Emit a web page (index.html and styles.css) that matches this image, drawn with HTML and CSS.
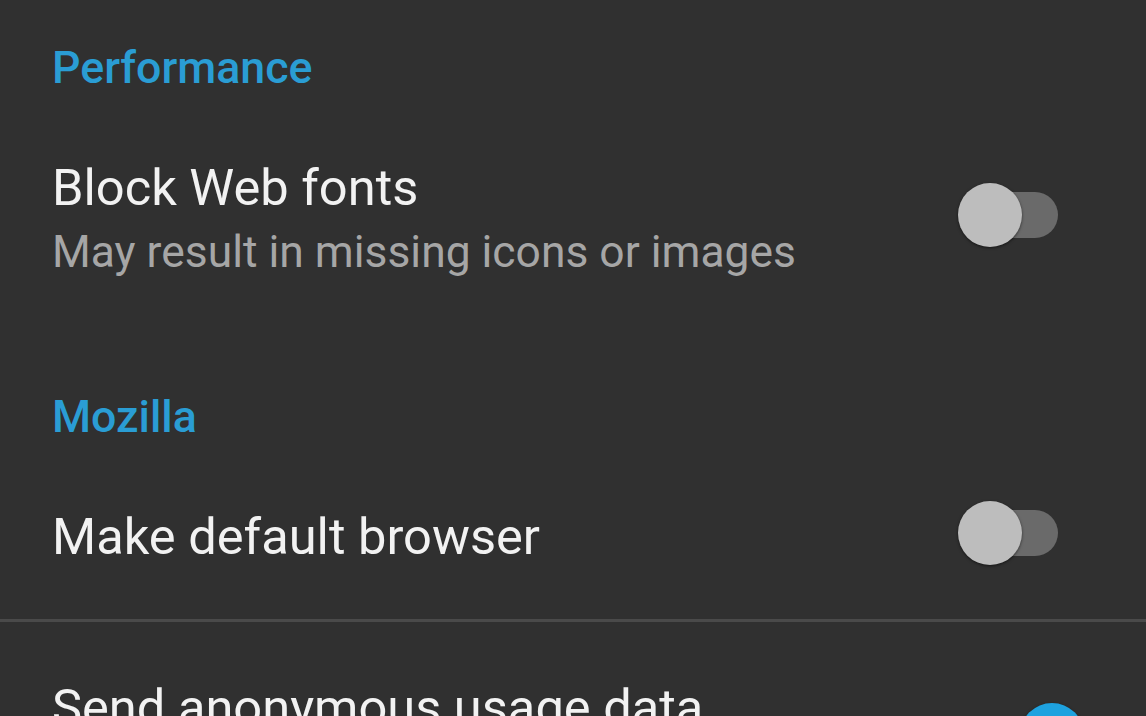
FILE: index.html
```html
<!DOCTYPE html>
<html lang="en">
<head>
<meta charset="utf-8">
<title>Settings</title>
<link rel="stylesheet" href="styles.css">
</head>
<body>
<div class="list">
  <div class="category category--first">Performance</div>
  <div class="pref">
    <div class="pref__text">
      <div class="pref__title">Block Web fonts</div>
      <div class="pref__summary">May result in missing icons or images</div>
    </div>
    <div class="switch"><span class="switch__thumb"></span></div>
  </div>

  <div class="category">Mozilla</div>
  <div class="pref">
    <div class="pref__text">
      <div class="pref__title">Make default browser</div>
    </div>
    <div class="switch"><span class="switch__thumb"></span></div>
  </div>
  <div class="pref pref--bordered">
    <div class="pref__text">
      <div class="pref__title">Send anonymous usage data</div>
    </div>
    <div class="switch switch--on"><span class="switch__thumb"></span></div>
  </div>
</div>
</body>
</html>
```

FILE: styles.css
```css
html, body {
  margin: 0;
  padding: 0;
  background: #303030;
  overflow: hidden;
}

body {
  font-family: Roboto, "Noto Sans", sans-serif;
  width: 1146px;
  height: 716px;
}

.list {
  display: flex;
  flex-direction: column;
}

.category {
  padding: 60px 52px 0;
  font-size: 44.7px;
  line-height: 52px;
  font-weight: 500;
  color: #2a9dd4;
}

.category--first {
  padding-top: 42px;
}

.pref {
  display: flex;
  align-items: center;
  padding: 65px 88px 53px 52px;
}

.pref--bordered {
  align-items: flex-start;
  border-top: 3px solid #4a4a4a;
  padding-top: 57px;
}

.pref__text {
  flex: 1;
  display: flex;
  flex-direction: column;
}

.pref__title {
  font-size: 50.6px;
  line-height: 58px;
  color: #f2f2f2;
}

.pref__summary {
  margin-top: 9px;
  font-size: 44.4px;
  line-height: 52px;
  color: #a6a6a6;
}

.switch {
  position: relative;
  flex: none;
  width: 91px;
  height: 46px;
  margin-bottom: 8px;
  margin-left: 40px;
  border-radius: 23px;
  background: #6a6a6a;
}

.switch__thumb {
  position: absolute;
  left: -9px;
  top: -9px;
  width: 64px;
  height: 64px;
  border-radius: 50%;
  background: #bdbdbd;
  box-shadow: 0 1px 3px rgba(0, 0, 0, 0.55);
}

.switch--on {
  margin-top: 37px;
  margin-right: -17px;
  background: #1c5f80;
}

.switch--on .switch__thumb {
  left: auto;
  right: -9px;
  top: -13px;
  background: #1ea2df;
}
```
